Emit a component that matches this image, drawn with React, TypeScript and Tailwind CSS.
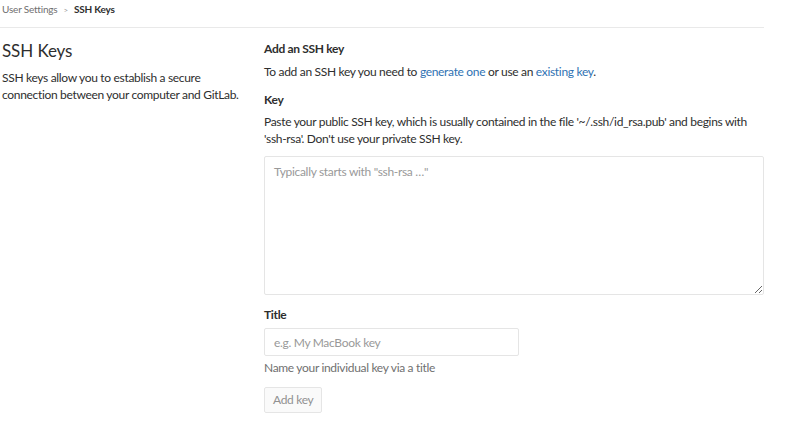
export default function App() {
  return (
    <div className="min-h-[433px] bg-white font-['Lato','Liberation_Sans',sans-serif] text-[12px] tracking-[-0.32px] text-[#2e2e2e]">
      <div className="w-[764px]">
        <nav className="flex h-[28px] items-center gap-[6px] border-b border-[#e9e9e9] pb-[8px] pl-[2px] text-[10px] tracking-[-0.2px]">
          <span className="text-[#707070]">User Settings</span>
          <span className="text-[8px] text-[#999]">&gt;</span>
          <span className="font-bold text-[#2e2e2e]">SSH Keys</span>
        </nav>

        <div className="flex pt-[11px]">
          <div className="w-[264px] shrink-0 pl-[2px] pr-[10px]">
            <h2 className="text-[17px] leading-[24px] tracking-[-0.1px]">SSH Keys</h2>
            <p className="mt-[6px] leading-[17px]">
              SSH keys allow you to establish a secure connection between your computer and GitLab.
            </p>
          </div>

          <div className="flex-1">
            <h4 className="mt-[1px] font-bold leading-[17px]">Add an SSH key</h4>
            <p className="mt-[6px] leading-[17px]">
              To add an SSH key you need to{" "}
              <a href="#" className="text-[#2f72b3]">generate one</a> or use an{" "}
              <a href="#" className="text-[#2f72b3]">existing key</a>.
            </p>

            <label className="mt-[11px] block font-bold leading-[17px]">Key</label>
            <p className="mt-[5px] leading-[17px]">
              Paste your public SSH key, which is usually contained in the file '~/.ssh/id_rsa.pub' and begins with
              'ssh-rsa'. Don't use your private SSH key.
            </p>
            <textarea
              className="mt-[9px] block h-[139px] w-full resize-y rounded-[2px] border border-[#e5e5e5] px-[9px] py-[6px] leading-[17px] placeholder:text-[#999] focus:outline-none"
              placeholder={'Typically starts with "ssh-rsa …"'}
            />

            <label className="mt-[11px] block font-bold leading-[17px]">Title</label>
            <input
              className="mt-[5px] block h-[28px] w-[255px] rounded-[2px] border border-[#e5e5e5] px-[9px] placeholder:text-[#999] focus:outline-none"
              placeholder="e.g. My MacBook key"
            />
            <p className="mt-[3px] leading-[17px] text-[#707070]">Name your individual key via a title</p>

            <button
              type="button"
              disabled
              className="mt-[11px] h-[26px] rounded-[2px] border border-[#e5e5e5] bg-[#fafafa] px-[8px] text-[#919191]"
            >
              Add key
            </button>
          </div>
        </div>
      </div>
    </div>
  );
}
